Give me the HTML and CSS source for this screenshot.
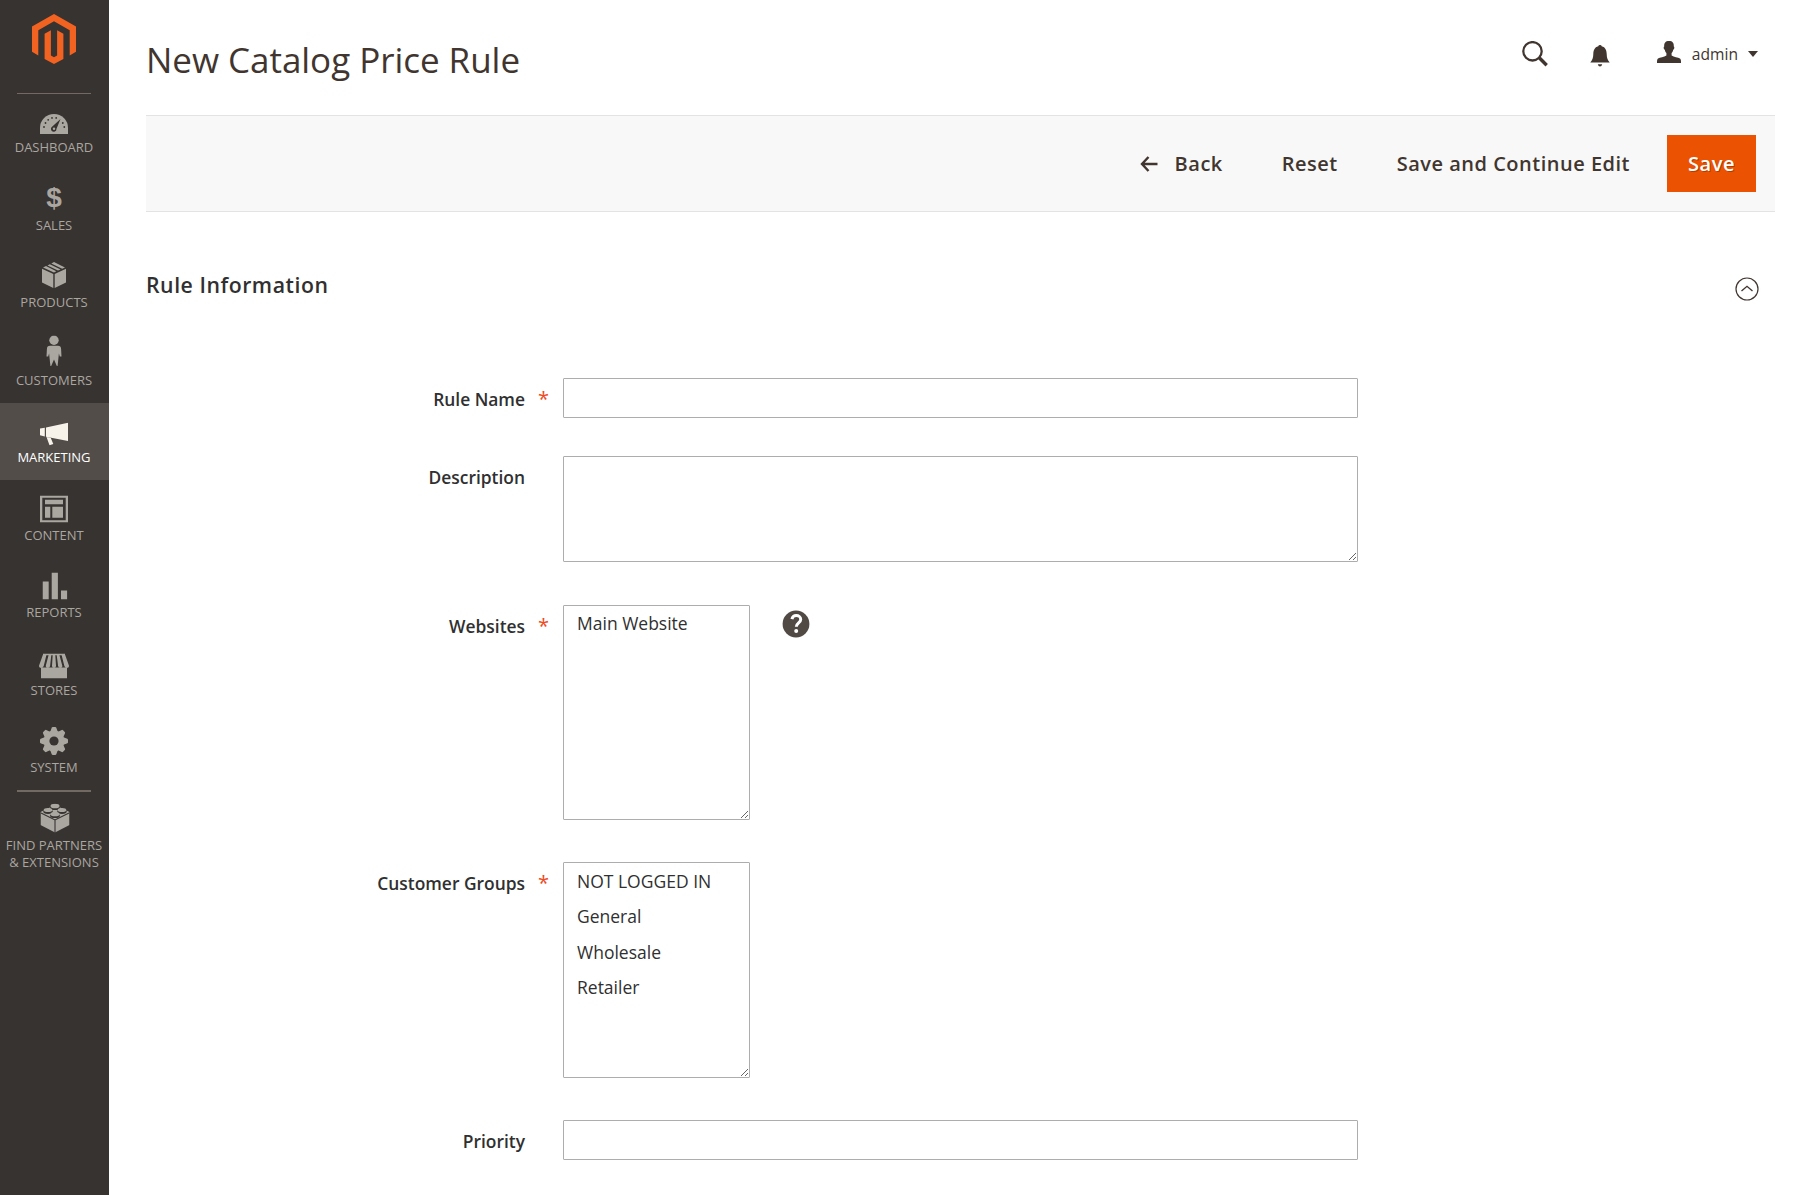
FILE: index.html
```html
<!DOCTYPE html>
<html lang="en">
<head>
<meta charset="utf-8">
<title>New Catalog Price Rule</title>
<link rel="stylesheet" href="styles.css">
</head>
<body>
<div class="admin">
  <aside class="sidebar">
    <a class="logo"><svg width="44" height="50" viewBox="0 0 44 50" fill="#f26322"><path d="M22 0 0 12.600v25.200l6.300 3.700V16.200L22 7.200l15.700 9v25.300l6.300-3.700V12.600z"/><path d="M25.100 41.500 22 43.300l-3.100-1.800V16.200l-6.300 3.600v25.300L22 50l9.400-4.900V19.800l-6.300-3.600z"/></svg></a>
    <nav class="menu">
      <a class="item first"><svg class="icon" width="28" height="20" viewBox="0 0 28 20"><path fill="currentColor" d="M0 20V14a14 14 0 0 1 28 0v6z"/><g fill="#373330"><circle cx="4" cy="13" r=".9"/><circle cx="5.500" cy="9" r=".9"/><circle cx="8.200" cy="5.800" r=".9"/><circle cx="12" cy="3.900" r=".9"/><circle cx="16.200" cy="3.900" r=".9"/><circle cx="22.800" cy="9" r=".9"/><circle cx="24.300" cy="13" r=".9"/><path d="M20.500 5 12.300 12.600a2.800 2.800 0 1 0 4.200 2.200z"/></g><circle cx="14" cy="14.700" r="1.200" fill="currentColor"/></svg><span>DASHBOARD</span></a>
      <a class="item sales"><span class="icon dollar">$</span><span>SALES</span></a>
      <a class="item products"><svg class="icon" width="24" height="26" viewBox="0 0 24 26" fill="currentColor"><path d="M0 6.800 11.300 12V26L0 20.500zM24 6.800 12.700 12V26L24 20.500zM1 5.500 4 4.100 14.300 9.300 12 10.600zM5.500 3.400 7.800 2.300 18.600 7.400 16 8.600zM9.300 1.600 12 0 23 5.500 20.200 6.700z"/></svg><span>PRODUCTS</span></a>
      <a class="item customers"><svg class="icon" width="16" height="31" viewBox="0 0 16 31" fill="currentColor"><circle cx="8" cy="4.700" r="4.700"/><path d="M4 10.300h8q3 0 3.100 3.200L15.500 21h-1.700l-.9-3-1.300 12.500H10.800L8 24 5.200 30.500H4.400L3.100 18l-.9 3H.5l.4-7.500Q1 10.300 4 10.300z"/></svg><span>CUSTOMERS</span></a>
      <a class="item active"><svg class="icon" width="28" height="23" viewBox="0 0 28 23" fill="currentColor"><path d="M28 .3V18.500L6 14.300V5zM0 6 4.800 5.200v8.800L0 12.800zM6.500 14.500l4.300 1 2.500 6-3.800 1.200z"/></svg><span>MARKETING</span></a>
      <a class="item content"><svg class="icon" width="28" height="27" viewBox="0 0 28 27" fill="currentColor"><path fill-rule="evenodd" d="M0 0h28v27H0zM2.300 2.300v22.400h23.400V2.300z"/><path d="M5 4.300h18v4.400H5zM5 11.200h5.300v11H5zM12.300 11.200H23v11H12.300z"/></svg><span>CONTENT</span></a>
      <a class="item reports"><svg class="icon" width="25" height="27" viewBox="0 0 25 27" fill="currentColor"><path d="M0 9h6.200v18H0zM9.200 0h6.200v27H9.200zM18.500 18h6.200v9h-6.200z"/></svg><span>REPORTS</span></a>
      <a class="item stores"><svg class="icon" width="30" height="25" viewBox="0 0 30 25" fill="currentColor"><path d="M4 0h22v1.800H4zM2 14h26v11H2z"/><path d="M3.800 1.500h3.600L4.800 12.300q-.7 2.200-2.600 2.200-2.400 0-2.200-2.300zM9.600 1.500h2.700l-1.200 11q-.3 2-2.300 2-2.300 0-2-2.300zM13.700 1.500h2.600l.7 10.700q.1 2.300-2 2.300t-2-2.300zM17.700 1.500h2.700l2.900 10.700q.4 2.300-1.900 2.300-2 0-2.300-2zM22.600 1.500h3.600L30 12.200q.2 2.300-2.200 2.300-1.900 0-2.500-2.200z"/></svg><span>STORES</span></a>
      <a class="item system"><svg class="icon" width="28" height="28" viewBox="-14 -14 28 28"><g fill="currentColor"><circle r="10.400"/><g id="teeth"><path d="M-3.700-9.500-2.300-13.300Q-2-14-1.200-14h2.400q.8 0 1.100.7L3.700-9.500V9.500L2.300 13.300Q2 14 1.200 14h-2.400q-.8 0-1.100-.7L-3.700 9.500z"/></g><use href="#teeth" transform="rotate(45)"/><use href="#teeth" transform="rotate(90)"/><use href="#teeth" transform="rotate(135)"/></g><circle r="4.600" fill="#373330"/></svg><span>SYSTEM</span></a>
      <a class="item partners"><svg class="icon" width="29" height="29" viewBox="0 0 29 29"><path fill="currentColor" d="M0 8.500 14.500 1.500 29 8.500v13L14.500 29 0 21.500z"/><path d="m.5 9.500 14 7 14-7M14.500 16.500V29" fill="none" stroke="#373330" stroke-width="1.100"/><g fill="#373330"><ellipse cx="14.500" cy="4" rx="4.900" ry="2.600"/><ellipse cx="7.500" cy="8" rx="4.700" ry="2.400"/><ellipse cx="21.500" cy="8" rx="4.700" ry="2.400"/><ellipse cx="14.500" cy="12.200" rx="4.900" ry="2.400"/></g><g fill="currentColor"><ellipse cx="14.500" cy="2.500" rx="4.500" ry="2.300"/><ellipse cx="7.500" cy="6.500" rx="4.300" ry="2.100"/><ellipse cx="21.500" cy="6.500" rx="4.300" ry="2.100"/><ellipse cx="14.500" cy="10.700" rx="4.500" ry="2.100"/></g></svg><span>FIND PARTNERS<br>&amp; EXTENSIONS</span></a>
    </nav>
  </aside>
  <main class="page">
    <header class="header">
      <h1>New Catalog Price Rule</h1>
      <div class="tools">
        <svg width="26" height="26" viewBox="0 0 26 26" fill="none" stroke="#41362f"><circle cx="10.500" cy="10.300" r="9.200" stroke-width="2.300"/><path d="m17 16.500 7.700 7.700" stroke-width="3.400"/></svg>
        <svg class="bell" width="20" height="22" viewBox="0 0 20 22" fill="#41362f"><path d="M10 0q1.500 0 1.700 1.300C15.500 2.200 16.600 5.500 16.700 9c.1 3.500.6 6 3 8.400H.3C2.700 15 3.200 12.500 3.300 9c.1-3.500 1.200-6.800 5-7.700Q8.500 0 10 0zM7.800 19.300h4.400q-.5 2.200-2.200 2.200t-2.200-2.200z"/></svg>
        <div class="user">
          <svg width="24" height="22" viewBox="0 0 24 22" fill="#41362f"><path d="M12 0c3.600 0 5 2 4.800 5.400 1 .3.500 3-.6 3.300-.3 1.700-.9 2.700-1.600 3.400v2.300c2.300 1.500 6.500 1.800 8.400 3.200 1 .8 1 2.500 1 4.400H0c0-1.900 0-3.600 1-4.400 1.900-1.400 6.100-1.700 8.400-3.200v-2.300C8.700 11.400 8.100 10.400 7.800 8.700 6.700 8.400 6.200 5.700 7.200 5.400 7 2 8.400 0 12 0z"/></svg>
          <span>admin</span>
          <svg class="caret" width="10" height="6" viewBox="0 0 10 6" fill="#41362f"><path d="M0 0h10L5 6z"/></svg>
        </div>
      </div>
    </header>
    <div class="toolbar">
      <button class="btn back"><svg width="18" height="16" viewBox="0 0 18 16" fill="none" stroke="#41362f" stroke-width="2.400"><path d="M8.500 1 2 8l6.500 7M2 8h15.500"/></svg>Back</button>
      <button class="btn reset">Reset</button>
      <button class="btn continue">Save and Continue Edit</button>
      <button class="btn primary">Save</button>
    </div>
    <section>
      <div class="section-head">
        <h2>Rule Information</h2>
        <svg width="24" height="24" viewBox="0 0 24 24" fill="none" stroke="#41362f" stroke-width="1.200"><circle cx="12" cy="12" r="11"/><path d="m6.500 14 5.500-4.700 5.500 4.700" stroke-width="1.400"/></svg>
      </div>
      <form class="form">
        <div class="field name"><label class="required">Rule Name</label><input type="text"></div>
        <div class="field desc"><label>Description</label><textarea></textarea></div>
        <div class="field sites"><label class="required">Websites</label><select multiple size="6"><option>Main Website</option></select>
          <svg class="help" width="28" height="28" viewBox="0 0 28 28"><circle cx="14" cy="14" r="13.400" fill="#514943"/><path d="M9.900 9.200C10.500 6.500 12 5.600 14.200 5.600c2.500 0 4.500 1.400 4.500 3.800 0 3.500-4.400 3.400-4.400 7.400" fill="none" stroke="#fff" stroke-width="3"/><circle cx="14.200" cy="21" r="2" fill="#fff"/></svg></div>
        <div class="field groups"><label class="required">Customer Groups</label><select multiple size="6"><option>NOT LOGGED IN</option><option>General</option><option>Wholesale</option><option>Retailer</option></select></div>
        <div class="field priority"><label>Priority</label><input type="text"></div>
      </form>
    </section>
  </main>
</div>
</body>
</html>
```
FILE: styles.css
```css
* { box-sizing: border-box; }
body { margin: 0; background: #fff; color: #303030; font-family: "Open Sans", sans-serif; overflow: hidden; }
.admin { display: flex; height: 1195px; }
.sidebar { width: 109px; flex: none; background: #373330; }
.logo { display: flex; justify-content: center; height: 93px; padding: 14px 1px 0 0; }
.menu { display: flex; flex-direction: column; }
.item { position: relative; display: flex; flex-direction: column; align-items: center; height: 77.5px; padding-top: 46px; font-size: 13px; line-height: 17px; text-align: center; color: #aaa6a0; padding-right: 1px; white-space: nowrap; }
.item .icon { position: absolute; top: 31px; left: 54px; transform: translate(-50%, -50%); }
.item.sales .icon { top: 27px; }
.item.products .icon { top: 27px; }
.item.customers .icon { top: 25px; }
.item.active .icon { top: 30.500px; }
.item.content .icon { top: 28px; }
.item.reports .icon { top: 27.500px; left: 54.500px; }
.item.stores .icon { top: 30px; }
.item.system .icon { top: 27.500px; }
.item.partners .icon { top: 27px; left: 54.500px; }
.item.active { height: 77px; margin-bottom: .5px; background: #524d49; color: #f7f3eb; }
.item.active span { color: #fff; }
.first::before, .partners::before { content: ""; position: absolute; top: 0; left: 17px; width: 74px; height: 1px; background: #736963; }
.partners::before { top: -1px; height: 2px; }
.dollar { font-family: "Liberation Sans", sans-serif; font-size: 28px; font-weight: 700; line-height: 30px; }
.page { flex: 1; padding: 0 37px; }
.header { display: flex; justify-content: space-between; height: 115px; }
h1 { margin: 36px 0 0; font-size: 35px; font-weight: 400; line-height: 48px; letter-spacing: -.04px; color: #41362f; }
.tools { display: flex; align-items: flex-start; padding: 41px 17px 0 0; }
.bell { margin: 4px 0 0 42px; }
.user { display: flex; align-items: flex-start; margin-left: 47px; font-size: 15.600px; line-height: 26px; color: #41362f; }
.user span { margin: 0 10px 0 11px; }
.caret { margin-top: 10px; }
.toolbar { display: flex; align-items: center; justify-content: flex-end; height: 97px; padding-right: 19px; background: #f8f8f8; border: solid #e3e3e3; border-width: 1px 0; }
.btn { display: flex; align-items: center; height: 57px; padding: 0; border: 0; background: none; color: #41362f; font: 600 20px/28px "Open Sans", sans-serif; letter-spacing: .5px; white-space: nowrap; }
.back svg { margin-right: 17px; }
.reset { margin-left: 59px; }
.continue { margin-left: 59px; }
.primary { margin-left: 37px; width: 89px; justify-content: center; background: #eb5202; color: #fff; text-shadow: 1px 1px 0 rgba(0,0,0,.25); }
.section-head { display: flex; justify-content: space-between; padding: 58px 16px 0 0; height: 166px; }
.section-head svg { margin-top: 7px; }
h2 { margin: 0; font-size: 21.25px; font-weight: 600; line-height: 30px; letter-spacing: .53px; }
.field { display: flex; align-items: flex-start; }
label { display: flex; justify-content: flex-end; width: 417px; padding-right: 38px; margin-top: 9px; font-size: 17.400px; font-weight: 600; line-height: 24px; position: relative; }
.required::after { content: "*"; position: absolute; right: 14px; top: 0; font-size: 20px; font-weight: 400; color: #ee4a1e; }
input, textarea, select { display: block; margin: 0; border: 1px solid #adadad; border-radius: 1px; background: #fff; color: #303030; font: 400 17.500px/24px "Open Sans", sans-serif; padding: 0 12px; outline: 0; }
input { width: 795px; height: 40px; }
textarea { width: 795px; height: 106px; }
select { width: 187px; height: 215px; padding: 0 3px; resize: both; overflow: auto; }
option { padding: 6px 10px 5.400px; min-height: 35.400px; line-height: 24px; }
.sites option { padding-top: 5px; }
.desc { margin-top: 38px; }
.sites { margin-top: 43px; }
.help { margin: 5px 0 0 32px; }
.groups { margin-top: 42px; }
.groups select { height: 216px; }
.priority { margin-top: 42px; }
```
